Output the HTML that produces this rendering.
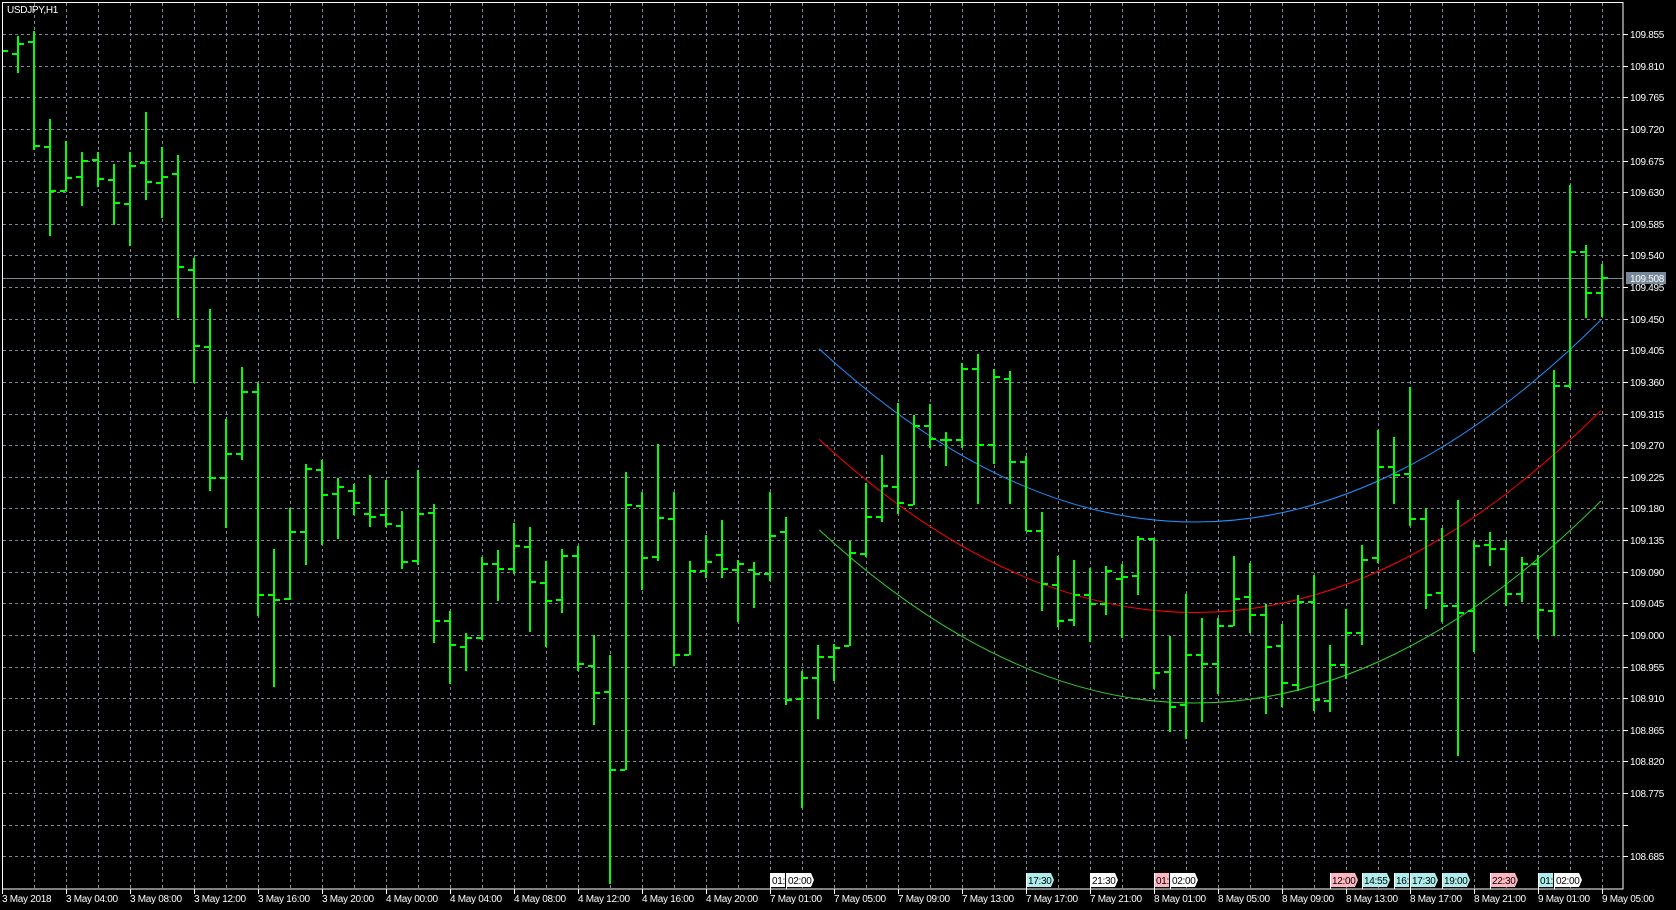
<!DOCTYPE html>
<html><head><meta charset="utf-8">
<style>
html,body{margin:0;padding:0;background:#000;overflow:hidden}
body{width:1676px;height:910px;position:relative;font-family:"Liberation Sans","DejaVu Sans",sans-serif}
svg{position:absolute;left:0;top:0}
.t{font-size:10px;fill:#fff;letter-spacing:-0.3px}
.m{font-size:10px;fill:#000;letter-spacing:-0.3px}
</style></head><body>
<svg id="s" width="1676" height="910" xmlns="http://www.w3.org/2000/svg">
<g id="grid" stroke="#778899" stroke-width="1" stroke-dasharray="3,3" shape-rendering="crispEdges"></g>
<line x1="2" y1="278.5" x2="1623" y2="278.5" stroke="#778899" stroke-width="1" shape-rendering="crispEdges"/>
<g fill="none" stroke-width="1">
<path d="M819 348.7 Q1210 709.2 1601 319.9" stroke="#1e90ff"/>
<path d="M819 439.2 Q1210 799.7 1601 410.4" stroke="#ff0000"/>
<path d="M819 529.7 Q1210 890.2 1601 500.9" stroke="#32cd32"/>
</g>
<g id="bars" fill="#00ff00" shape-rendering="crispEdges"></g>
<rect x="2.5" y="2.5" width="1620.5" height="886.5" fill="none" stroke="#fff" stroke-width="1" shape-rendering="crispEdges"/>
<g id="ticks" stroke="#fff" shape-rendering="crispEdges"></g>
<text x="7" y="13" class="t">USDJPY,H1</text>
<g id="plabels"></g>
<rect x="1626" y="272" width="40" height="12" fill="#778899"/>
<text x="1630" y="282" class="t">109.508</text>
<g id="tlabels">
<text class="t" x="2" y="902">3 May 2018</text>
<text class="t" x="66" y="902">3 May 04:00</text>
<text class="t" x="130" y="902">3 May 08:00</text>
<text class="t" x="194" y="902">3 May 12:00</text>
<text class="t" x="258" y="902">3 May 16:00</text>
<text class="t" x="322" y="902">3 May 20:00</text>
<text class="t" x="386" y="902">4 May 00:00</text>
<text class="t" x="450" y="902">4 May 04:00</text>
<text class="t" x="514" y="902">4 May 08:00</text>
<text class="t" x="578" y="902">4 May 12:00</text>
<text class="t" x="642" y="902">4 May 16:00</text>
<text class="t" x="706" y="902">4 May 20:00</text>
<text class="t" x="770" y="902">7 May 01:00</text>
<text class="t" x="834" y="902">7 May 05:00</text>
<text class="t" x="898" y="902">7 May 09:00</text>
<text class="t" x="962" y="902">7 May 13:00</text>
<text class="t" x="1026" y="902">7 May 17:00</text>
<text class="t" x="1090" y="902">7 May 21:00</text>
<text class="t" x="1154" y="902">8 May 01:00</text>
<text class="t" x="1218" y="902">8 May 05:00</text>
<text class="t" x="1282" y="902">8 May 09:00</text>
<text class="t" x="1346" y="902">8 May 13:00</text>
<text class="t" x="1410" y="902">8 May 17:00</text>
<text class="t" x="1474" y="902">8 May 21:00</text>
<text class="t" x="1538" y="902">9 May 01:00</text>
<text class="t" x="1602" y="902">9 May 05:00</text>
</g>
<g id="markers"></g>
<g id="mtext">
<text class="m" x="772" y="884">01:</text>
<text class="m" x="788" y="884">02:00</text>
<text class="m" x="1028" y="884">17:30</text>
<text class="m" x="1092" y="884">21:30</text>
<text class="m" x="1156" y="884">01:</text>
<text class="m" x="1172" y="884">02:00</text>
<text class="m" x="1332" y="884">12:00</text>
<text class="m" x="1364" y="884">14:55</text>
<text class="m" x="1396" y="884">16:</text>
<text class="m" x="1412" y="884">17:30</text>
<text class="m" x="1444" y="884">19:00</text>
<text class="m" x="1492" y="884">22:30</text>
<text class="m" x="1540" y="884">01:</text>
<text class="m" x="1556" y="884">02:00</text>
</g>
</svg>
<script>
var NS="http://www.w3.org/2000/svg";
function el(p,n,a){var e=document.createElementNS(NS,n);for(var k in a)e.setAttribute(k,a[k]);p.appendChild(e);return e;}
var g=document.getElementById("grid");
for(var k=1;k<=50;k++){var x=2+32*k+0.5;el(g,"line",{x1:x,y1:3,x2:x,y2:889});}
for(var k=0;k<27;k++){var y=Math.round(34+31.63*k)+0.5;el(g,"line",{x1:3,y1:y,x2:1623,y2:y});}
var tk=document.getElementById("ticks");
var pl=document.getElementById("plabels");
for(var k=0;k<27;k++){var y=Math.round(34+31.63*k);
 el(tk,"line",{x1:1623,y1:y+0.5,x2:1628,y2:y+0.5});
 if(k==25)continue;
 var p=(109.855-0.045*k).toFixed(3);
 var t=el(pl,"text",{x:1630,y:y+4,"class":"t"});t.textContent=p;}
for(var k=0;k<26;k++){var x=2+64*k+0.5;el(tk,"line",{x1:x,y1:889,x2:x,y2:894});}
var D=[[45,56,51,51],[36.1,72.7,53.5,43.7],[31.2,150.3,42.3,145.9],[119.1,235.6,146.8,191],[140.5,191.4,191,177.6],
[152.1,205.7,176.7,160.6],[152.1,186.5,159.7,178.5],[164.2,225.3,179.8,202.6],[152.1,246.3,203.5,165.5],[112,200.3,162.8,181.6],
[146.8,217.8,182.9,176.7],[154.8,317.8,173.6,267.3],[257.9,383.4,269.5,345.9],[308.8,491.4,346.8,478.4],[419.1,527.6,478.4,454.3],
[366.9,459.7,454.3,392.3],[382.9,616.4,392.3,594.5],[549,686.5,594.5,600.3],[507.9,600.3,599.4,531.6],[464.2,564.6,531.6,468.6],
[460.2,545.4,470.4,494.5],[477.6,539.2,493.6,487.4],[483.8,514.6,490.5,502.6],[474.9,527.1,513.7,516.8],[479.8,526.7,514.6,523.5],
[511,568.6,525.8,561.5],[470,564.7,560.7,513.7],[504,642.7,512.7,620.7],[611,683.7,620.7,644.7],[633,670.7,646.7,637.7],
[557,639.7,637.7,563.7],[550,601,563.7,568.7],[523,573.7,568.7,546.3],[527,631.7,547.3,581.7],[561,646.7,582.7,600.7],
[549,612.7,599.7,555.7],[546,670.7,555.7,663.7],[635,724.7,665.7,692.7],[655.3,884,691.7,770.3],[472,770.3,770.3,504.7],
[492,589.7,505.7,557.7],[444,560.7,556.7,518],[492,665.7,518.7,654.7],[561,655,654.7,570.7],[535,577.7,570.7,561.7],
[520,577.7,554.7,568.7],[559.7,622,569.7,563.7],[562,607.7,569.7,573.7],[492,580.7,573.7,535.7],[517,705.3,531.7,699.7],
[671,807.7,698.7,678.3],[645,718.7,678.3,656.7],[644,681,656.7,648.3],[541.3,646,645.7,552.7],[482.7,557.3,553.7,516.7],
[455.3,522.3,516.7,485.7],[403,514,486.7,503],[415.3,504.7,504.7,426],[404,447.7,426,439.3],[432,465.7,439.7,439.7],
[363,448.3,439.7,369],[354,503.7,369,444.7],[369,463.7,444.7,376.7],[371.3,503.7,378.7,462],[456,531.3,462,531],
[512,610.7,531,584],[556,626.7,584.7,621],[560,625.7,620,595],[568,641.7,595,604],[566,615,604,571.3],
[564,637.7,578.7,576.7],[536.3,594.7,575.7,539],[538,688.7,539,673.3],[636,731.7,672,706.7],[594,738.7,705.3,654.7],
[618,721.7,654.7,664.3],[618,694,664.3,625.7],[556,626,625.7,598.7],[563,633.1,597.1,615.1],[603.6,714.2,615.1,646.8],
[623.9,706.5,645.7,682.8],[594.8,690.5,685.1,601.7],[574.5,710.8,601.7,700],[644.9,711.5,700.8,664.8],[608.6,679.4,664.8,633.1],
[545,644.6,633.1,559.6],[429.9,563.4,557.7,467],[437.1,503.7,467,475.4],[386.6,526.3,473.5,519],[508.3,608.6,519,594.8],
[528.2,621.6,592.9,605.5],[499.5,755.5,605.5,613.2],[539.7,652.2,610.9,546.2],[532,565.7,544.7,548.5],[540,605.5,548.5,594],
[556.9,601.7,594,564.2],[555.4,638.8,564.2,610.1],[370.2,636.1,610.9,385.8],[184.5,388.1,385.8,252.3],[245,317.7,252.3,292.8],
[264.1,317,292.8,277.9]];
var b=document.getElementById("bars");
for(var i=0;i<D.length;i++){var x=2+16*i,d=D[i];
 var H=Math.round(d[0]),L=Math.round(d[1]),O=Math.round(d[2]),C=Math.round(d[3]);
 if(i>0){el(b,"rect",{x:x-1,y:H,width:2,height:Math.max(2,L-H)});
 el(b,"rect",{x:x-6,y:O-1,width:5,height:2});}
 el(b,"rect",{x:x+1,y:C-1,width:5,height:2});}
var M=[[770,15,"#fff",0],[786,28,"#fff",1],[1026,28,"#afeeee",1],[1090,28,"#fff",1],[1154,15,"#ffb6c1",0],[1170,28,"#fff",1],
[1330,28,"#ffb6c1",1],[1362,28,"#afeeee",1],[1394,15,"#afeeee",0],[1410,28,"#afeeee",1],[1442,28,"#afeeee",1],[1490,28,"#ffb6c1",1],
[1538,15,"#afeeee",0],[1554,28,"#fff",1]];
var mg=document.getElementById("markers");
for(var j=0;j<M.length;j++){var m=M[j],x=m[0],w=m[1];
 var d=m[3]?("M"+x+" 873 H"+(x+w-3)+" L"+(x+w)+" 880 L"+(x+w-3)+" 887 H"+x+" Z"):("M"+x+" 873 H"+(x+w)+" V887 H"+x+" Z");
 el(mg,"path",{d:d,fill:m[2]});
 el(mg,"line",{x1:x+0.5,y1:873,x2:x+0.5,y2:889,stroke:"#fff"});}
</script>
</body></html>
